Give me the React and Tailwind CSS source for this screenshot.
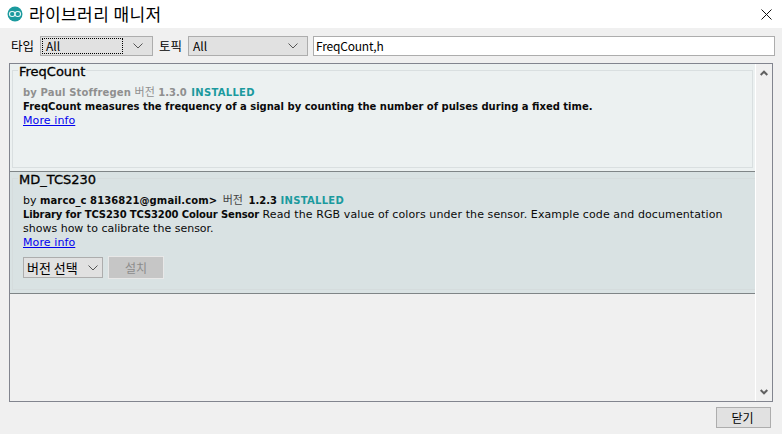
const cjk = "font-['Noto_Sans_CJK_KR','Noto_Sans',sans-serif]";
const body = "font-['DejaVu_Sans','Noto_Sans_CJK_KR',sans-serif] text-[11px] leading-[14px]";

function ArduinoLogo() {
  return (
    <svg width="16" height="16" viewBox="0 0 16 16" className="shrink-0">
      <circle cx="8" cy="8" r="7.5" fill="#1b9a9e" />
      <rect x="2.5" y="5.5" width="5.5" height="5" rx="2.5" fill="none" stroke="#e8f6f6" strokeWidth="1.1" />
      <rect x="8" y="5.5" width="5.5" height="5" rx="2.5" fill="none" stroke="#e8f6f6" strokeWidth="1.1" />
    </svg>
  );
}

function Chevron({ className = "" }) {
  return (
    <svg width="10" height="6" viewBox="0 0 10 6" className={className}>
      <path d="M.5.5 5 5 9.5.5" fill="none" stroke="#555" strokeWidth="1" />
    </svg>
  );
}

function ScrollArrow({ className = "" }) {
  return (
    <svg width="8" height="6" viewBox="0 0 8 6" className={className}>
      <path d="M.7 1 4 4.3 7.3 1" fill="none" stroke="#606060" strokeWidth="2" />
    </svg>
  );
}

function Select({ label, className = "", focused }) {
  return (
    <div className={`flex h-[20px] items-center border border-[#adadad] bg-[#e1e1e1] pr-[9px] ${className}`}>
      <div className={`mx-px flex h-[16px] flex-1 items-center pl-[3px] ${focused ? "border border-dotted border-black" : ""}`}>
        <span className={`${cjk} text-[12px] text-black`}>{label}</span>
      </div>
      <Chevron className="ml-[9px]" />
    </div>
  );
}

function LibraryItem({ title, bg, inner, className = "", children }) {
  return (
    <div className={`px-[2px] pt-[6px] ${bg} ${className}`}>
      <div className={`relative h-full border ${inner} px-[10px]`}>
        <span className={`absolute left-[5px] top-[-6px] px-px font-['DejaVu_Sans',sans-serif] text-[13px] leading-[14px] text-black [-webkit-text-stroke:0.3px_black] ${bg}`}>
          {title}
        </span>
        {children}
      </div>
    </div>
  );
}

export default function App() {
  return (
    <div className="flex h-[434px] w-[782px] flex-col overflow-hidden bg-[#f0f0f0]">
      <header className="flex h-[28px] items-center bg-white pl-[7px] pr-[10px]">
        <ArduinoLogo />
        <h1 className={`${cjk} ml-[6px] flex-1 text-[17px] leading-[24px] font-normal tracking-[0.4px] text-black`}>라이브러리 매니저</h1>
        <svg width="11" height="11" viewBox="0 0 11 11">
          <path d="M.5.5l10 10M10.5.5l-10 10" stroke="#111" strokeWidth="1" />
        </svg>
      </header>

      <div className="flex h-[35px] items-start pl-[11px] pr-[7px] pt-[8px]">
        <span className={`${cjk} w-[29px] text-[12.5px] leading-[20px] text-black`}>타입</span>
        <Select label="All" focused className="w-[113px]" />
        <span className={`${cjk} ml-[6px] w-[29px] text-[12.5px] leading-[20px] text-black`}>토픽</span>
        <Select label="All" className="w-[120px]" />
        <div className="ml-[5px] flex h-[20px] flex-1 items-center border border-[#adadad] bg-white pl-[2px]">
          <span className={`${cjk} text-[12px] tracking-[-0.2px] text-black`}>FreqCount,h</span>
        </div>
      </div>

      <div className="ml-[9px] flex h-[339px] w-[764px] border border-[#82858f]">
        <div className="flex flex-1 flex-col border-r border-white">
          <LibraryItem title="FreqCount" bg="bg-[#ecf1f1]" inner="border-[#d9dfe0]" className="h-[107px] pb-[3px]">
            <div className={`${body} pt-[13px] text-[#0a0a0a]`}>
              <p className="text-[10px] font-bold text-[#8f8f8f]">
                <span className="tracking-[0.15px]">by Paul Stoffregen</span>{" "}
                <span className={`${cjk} text-[11px] font-normal`}>버전</span> 1.3.0{" "}
                <span className="ml-[1px] tracking-[0.3px] text-[#1b9a9e]">INSTALLED</span>
              </p>
              <p className="text-[10px] font-bold">FreqCount measures the frequency of a signal by counting the number of pulses during a fixed time.</p>
              <a className="tracking-[0.1px] text-[#0000ee] underline">More info</a>
            </div>
          </LibraryItem>
          <LibraryItem
            title="MD_TCS230"
            bg="bg-[#d9e2e3]"
            inner="border-[#d5dcdd] border-r-0"
            className="h-[123px] border-y border-[#7f8587] pb-[3px] pr-0"
          >
            <div className={`${body} pt-[13px] text-[#0a0a0a]`}>
              <p>
                by <b className="text-[10px] tracking-[0.1px]">marco_c 8136821@gmail.com&gt;</b>{" "}
                <span className={`${cjk} ml-[2px] text-[#444]`}>버전</span>{" "}
                <b className="ml-[2px] text-[10px]">1.2.3</b>{" "}
                <b className="text-[10px] tracking-[0.3px] text-[#1b9a9e]">INSTALLED</b>
              </p>
              <p>
                <b className="text-[10px] tracking-[-0.12px]">Library for TCS230 TCS3200 Colour Sensor</b>{" "}
                <span className="tracking-[0.1px]">Read the RGB value of colors under the sensor. Example code and documentation</span>{" "}
                shows how to calibrate the sensor.
              </p>
              <a className="tracking-[0.1px] text-[#0000ee] underline">More info</a>
              <div className="mt-[6px] flex items-center gap-[5px]">
                <div className="flex h-[21px] w-[80px] items-center border border-[#adadad] bg-[#e1e1e1] pl-[3px]">
                  <span className={`${cjk} flex-1 text-[13px] text-black`}>버전 선택</span>
                  <Chevron className="mr-[4px]" />
                </div>
                <div className={`${cjk} flex h-[23px] w-[56px] items-center justify-center border border-[#e8e8e8] bg-[#c6c6c6] text-[12px] text-[#8c8c8c]`}>
                  설치
                </div>
              </div>
            </div>
          </LibraryItem>
        </div>
        <div className="flex w-[16px] flex-col items-center justify-between py-[6px] pr-[1px]">
          <ScrollArrow className="rotate-180" />
          <ScrollArrow />
        </div>
      </div>

      <div className="flex flex-1 items-center justify-end pr-[11px] pb-[1px]">
        <button className={`${cjk} h-[21px] w-[55px] border border-[#adadad] bg-[#e1e1e1] pr-[2px] text-[12px] text-black`}>닫기</button>
      </div>
    </div>
  );
}
